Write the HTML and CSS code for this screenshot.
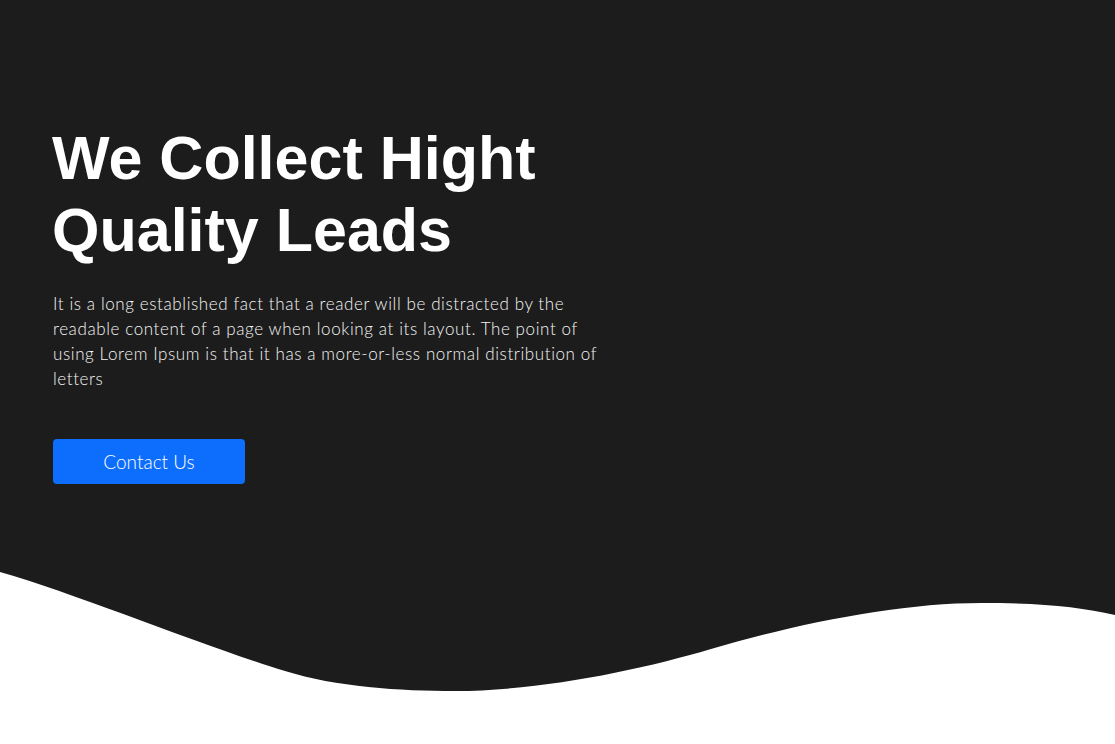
FILE: index.html
```html
<!DOCTYPE html>
<html lang="en">
<head>
<meta charset="utf-8">
<title>We Collect Hight Quality Leads</title>
<link rel="stylesheet" href="styles.css">
</head>
<body>
<section class="hero">
  <div class="hero-content">
    <h1 class="hero-title">We Collect Hight<br>Quality Leads</h1>
    <p class="hero-text">It is a long established fact that a reader will be distracted by the readable content of a page when looking at its layout. The point of using Lorem Ipsum is that it has a more-or-less normal distribution of letters</p>
    <a class="btn-contact" href="#">Contact Us</a>
  </div>
</section>
<svg class="wave" viewBox="0 0 1115 140" preserveAspectRatio="none" aria-hidden="true">
  <path d="M0,0 L1115,0 L1115,55 C1080,47 1040,43 981,43 C900,43 800,63 711,89 C640,110 540,131 455,131 C400,131 336,127 285,111 C200,85 80,35 0,12 Z" fill="#1c1c1c"/>
</svg>
</body>
</html>
```
FILE: styles.css
```css
html, body {
  margin: 0;
  padding: 0;
  background: #ffffff;
}
body {
  width: 1115px;
  height: 744px;
  overflow: hidden;
}
.hero {
  background: #1c1c1c;
  height: 560px;
  box-sizing: border-box;
  padding: 122px 0 0 52px;
}
.hero-content {
  display: flex;
  flex-direction: column;
  align-items: flex-start;
}
.hero-title {
  margin: 0;
  font-family: "Liberation Sans", Arial, sans-serif;
  font-weight: 700;
  font-size: 61px;
  line-height: 72px;
  color: #ffffff;
}
.hero-text {
  margin: 25px 0 0 1px;
  width: 556px;
  font-family: Lato, "Open Sans", sans-serif;
  font-weight: 300;
  font-size: 17px;
  letter-spacing: 0.6px;
  line-height: 25px;
  color: #f4f4f4;
}
.btn-contact {
  margin: 48px 0 0 1px;
  width: 192px;
  height: 45px;
  display: flex;
  align-items: center;
  justify-content: center;
  background: #0d6efd;
  border-radius: 4px;
  color: #ffffff;
  text-decoration: none;
  font-family: Lato, "Open Sans", sans-serif;
  font-weight: 300;
  font-size: 19px;
}
.wave {
  display: block;
  width: 1115px;
  height: 140px;
}
```
